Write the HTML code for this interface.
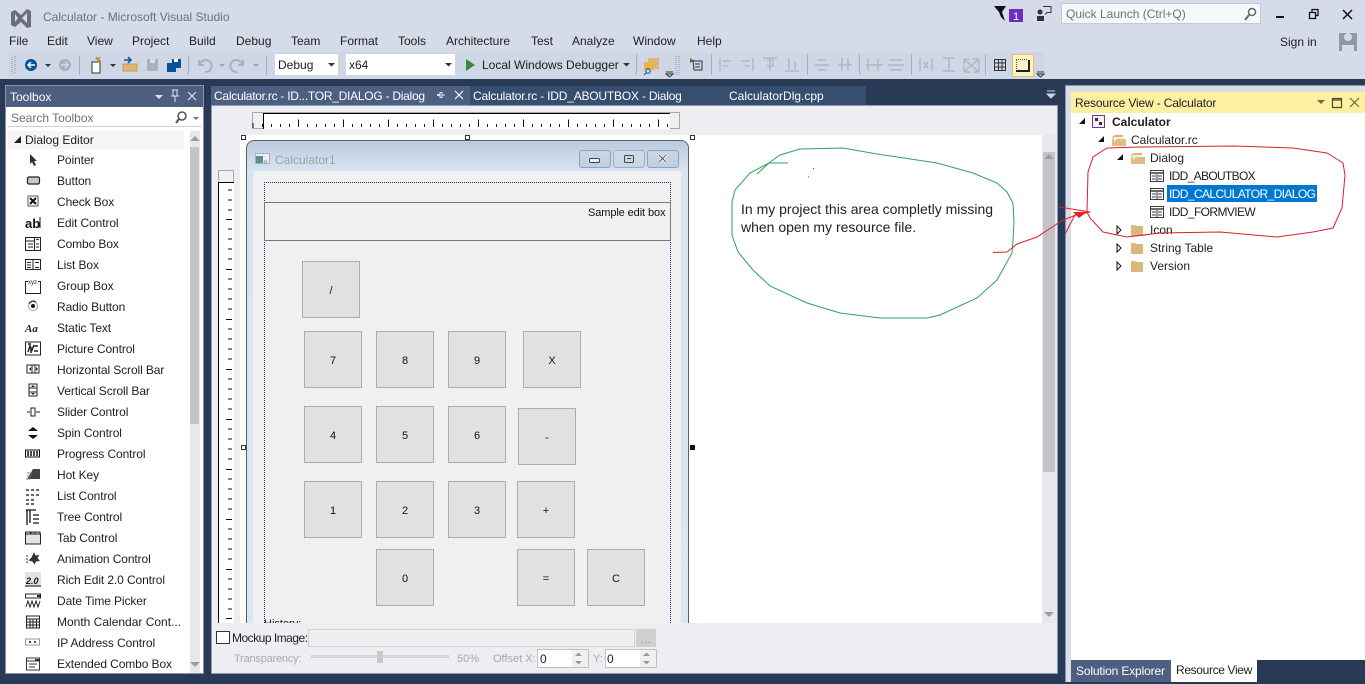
<!DOCTYPE html>
<html><head><meta charset="utf-8"><title>Calculator - Microsoft Visual Studio</title>
<style>
html,body{margin:0;padding:0;width:1365px;height:684px;overflow:hidden;background:#293a56}
body{position:relative;font:12px/16px "Liberation Sans",sans-serif;color:#1e1e1e}
div{position:absolute;box-sizing:border-box}
.t{white-space:nowrap;height:16px}
.i{letter-spacing:-.1px}
.btn{background:#e1e1e1;border:1px solid #adadad;width:58px;height:57px;text-align:center;line-height:58px;font-size:11px;color:#111}
.w{color:#fff}.g{color:#a9a9ad;font-size:11px}
svg{position:absolute;left:0;top:0}
</style></head><body>
<div style="left:0;top:0;width:1365px;height:79px;background:#d6dbe9"></div>
<div style="left:8px;top:52px;width:1037px;height:27px;background:#cfd6e5"></div>
<div style="left:275px;top:54px;width:63px;height:21px;background:#fff"></div>
<div style="left:346px;top:54px;width:109px;height:21px;background:#fff"></div>
<div style="left:1012px;top:54px;width:22px;height:23px;background:#fcf3c4;border:1px solid #e5c365"></div>
<div style="left:1061px;top:3px;width:200px;height:21px;background:#f7f8fb;border:1px solid #c4cad9"></div>
<div style="left:1339px;top:33px;width:18px;height:18px;background:#8f98a8"></div>

<div class="t" style="left:43px;top:9px;color:#6d7079">Calculator - Microsoft Visual Studio</div>
<div class="t" style="left:9px;top:33px">File</div>
<div class="t" style="left:47px;top:33px">Edit</div>
<div class="t" style="left:87px;top:33px">View</div>
<div class="t" style="left:132px;top:33px">Project</div>
<div class="t" style="left:189px;top:33px">Build</div>
<div class="t" style="left:236px;top:33px">Debug</div>
<div class="t" style="left:291px;top:33px">Team</div>
<div class="t" style="left:340px;top:33px">Format</div>
<div class="t" style="left:398px;top:33px">Tools</div>
<div class="t" style="left:446px;top:33px">Architecture</div>
<div class="t" style="left:531px;top:33px">Test</div>
<div class="t" style="left:572px;top:33px">Analyze</div>
<div class="t" style="left:633px;top:33px">Window</div>
<div class="t" style="left:697px;top:33px">Help</div>
<div class="t" style="left:1280px;top:34px">Sign in</div>
<div class="t" style="left:1066px;top:6px;color:#717171">Quick Launch (Ctrl+Q)</div>
<div class="t" style="left:278px;top:57px">Debug</div>
<div class="t" style="left:349px;top:57px">x64</div>
<div class="t" style="left:482px;top:57px">Local Windows Debugger</div>

<!-- Toolbox -->
<div style="left:5px;top:85px;width:199px;height:589px;background:#fff;border:1px solid #8593b0"></div>
<div style="left:6px;top:86px;width:197px;height:21px;background:#4d6082"></div>
<div class="t w" style="left:10px;top:89px">Toolbox</div>
<div style="left:7px;top:108px;width:195px;height:19px;background:#fff;border-bottom:1px solid #ccd2de"></div>
<div class="t" style="left:11px;top:110px;color:#717171">Search Toolbox</div>
<div style="left:8px;top:131px;width:176px;height:18px;background:#f5f5f7"></div>
<div class="t" style="left:25px;top:132px">Dialog Editor</div>
<div style="left:190px;top:131px;width:10px;height:542px;background:#e8e8ec"></div>
<div style="left:190px;top:147px;width:9px;height:277px;background:#c2c3c9"></div>
<div class="t i" style="left:57px;top:152px">Pointer</div>
<div class="t i" style="left:57px;top:173px">Button</div>
<div class="t i" style="left:57px;top:194px">Check Box</div>
<div class="t i" style="left:57px;top:215px">Edit Control</div>
<div class="t i" style="left:57px;top:236px">Combo Box</div>
<div class="t i" style="left:57px;top:257px">List Box</div>
<div class="t i" style="left:57px;top:278px">Group Box</div>
<div class="t i" style="left:57px;top:299px">Radio Button</div>
<div class="t i" style="left:57px;top:320px">Static Text</div>
<div class="t i" style="left:57px;top:341px">Picture Control</div>
<div class="t i" style="left:57px;top:362px">Horizontal Scroll Bar</div>
<div class="t i" style="left:57px;top:383px">Vertical Scroll Bar</div>
<div class="t i" style="left:57px;top:404px">Slider Control</div>
<div class="t i" style="left:57px;top:425px">Spin Control</div>
<div class="t i" style="left:57px;top:446px">Progress Control</div>
<div class="t i" style="left:57px;top:467px">Hot Key</div>
<div class="t i" style="left:57px;top:488px">List Control</div>
<div class="t i" style="left:57px;top:509px">Tree Control</div>
<div class="t i" style="left:57px;top:530px">Tab Control</div>
<div class="t i" style="left:57px;top:551px">Animation Control</div>
<div class="t i" style="left:57px;top:572px">Rich Edit 2.0 Control</div>
<div class="t i" style="left:57px;top:593px">Date Time Picker</div>
<div class="t" style="left:57px;top:614px">Month Calendar Cont...</div>
<div class="t i" style="left:57px;top:635px">IP Address Control</div>
<div class="t i" style="left:57px;top:656px">Extended Combo Box</div>

<!-- Document -->
<div style="left:211px;top:86px;width:259px;height:19px;background:#4d6082"></div>
<div style="left:470px;top:86px;width:396px;height:19px;background:#364e6f"></div>
<div class="t w" style="left:214px;top:88px;letter-spacing:-.26px">Calculator.rc - ID...TOR_DIALOG - Dialog</div>
<div class="t w" style="left:473px;top:88px;letter-spacing:-.2px">Calculator.rc - IDD_ABOUTBOX - Dialog</div>
<div class="t w" style="left:729px;top:88px">CalculatorDlg.cpp</div>
<div style="left:211px;top:105px;width:847px;height:569px;background:#eeeef2;border:1px solid #8e9bb6"></div>
<div style="left:240px;top:135px;width:802px;height:488px;background:#fff"></div>
<div style="left:1042px;top:135px;width:14px;height:488px;background:#e8e8ec"></div>
<div style="left:1043px;top:152px;width:12px;height:320px;background:#c2c3c9"></div>

<!-- Rulers -->
<div style="left:252px;top:112px;width:428px;height:17px;background:#f0f0f0;border:1px solid #a8a8a8"></div>
<div style="left:263px;top:113px;width:407px;height:16px;background:#fff;border-top:1px solid #000;border-left:1px solid #000"></div>
<div style="left:218px;top:170px;width:16px;height:13px;background:#f0f0f0;border:1px solid #a8a8a8"></div>
<div style="left:218px;top:182px;width:16px;height:441px;background:#fff;border-top:1px solid #000;border-left:1px solid #000"></div>

<!-- Dialog -->
<div style="left:246px;top:140px;width:443px;height:483px;border:1px solid #56606e;border-bottom:0;border-radius:8px 8px 0 0;background:linear-gradient(#bccbdb,#d7e4f2 30px,#d9e6f3)"></div>
<div style="left:253px;top:171px;width:428px;height:452px;background:#f0f0f0"></div>
<div class="t" style="left:275px;top:152px;color:#98a2ad">Calculator1</div>
<div style="left:579px;top:150px;width:32px;height:18px;border:1px solid #8fa1b5;border-radius:3px;background:linear-gradient(#c9d6e3,#bfcfdf)"></div>
<div style="left:613px;top:150px;width:32px;height:18px;border:1px solid #a0b0c2;border-radius:3px;background:linear-gradient(#cfdbe7,#c6d5e4)"></div>
<div style="left:647px;top:150px;width:32px;height:18px;border:1px solid #8fa1b5;border-radius:3px;background:linear-gradient(#c9d6e3,#bfcfdf)"></div>
<div style="left:264px;top:182px;width:407px;height:441px;border:1px dotted #23238a;border-bottom:0"></div>
<div style="left:264px;top:202px;width:407px;height:39px;border:1px solid #777"></div>
<div class="t" style="left:588px;top:205px;font-size:11px;color:#111;letter-spacing:-.1px">Sample edit box</div>
<div style="left:264px;top:616px;width:60px;height:7px;overflow:hidden;font-size:11px;line-height:16px;white-space:nowrap">History:</div>

<div class="btn" style="left:302px;top:261px">/</div>
<div class="btn" style="left:304px;top:331px">7</div>
<div class="btn" style="left:376px;top:331px">8</div>
<div class="btn" style="left:448px;top:331px">9</div>
<div class="btn" style="left:523px;top:331px">X</div>
<div class="btn" style="left:304px;top:406px">4</div>
<div class="btn" style="left:376px;top:406px">5</div>
<div class="btn" style="left:448px;top:406px">6</div>
<div class="btn" style="left:518px;top:408px">-</div>
<div class="btn" style="left:304px;top:481px">1</div>
<div class="btn" style="left:376px;top:481px">2</div>
<div class="btn" style="left:448px;top:481px">3</div>
<div class="btn" style="left:517px;top:481px">+</div>
<div class="btn" style="left:376px;top:549px">0</div>
<div class="btn" style="left:517px;top:549px">=</div>
<div class="btn" style="left:587px;top:549px">C</div>

<!-- Bottom options -->
<div style="left:216px;top:631px;width:14px;height:13px;background:#fff;border:1px solid #333"></div>
<div class="t" style="left:232px;top:630px;letter-spacing:-.5px">Mockup Image:</div>
<div style="left:308px;top:629px;width:327px;height:18px;background:#efeff1;border:1px solid #d0d0d0"></div>
<div style="left:636px;top:629px;width:20px;height:18px;background:#cfcfcf;color:#999;text-align:center;line-height:20px">...</div>
<div class="t g" style="left:234px;top:651px;letter-spacing:-.2px">Transparency:</div>
<div style="left:311px;top:655px;width:138px;height:3px;background:#dcdcdc;border:1px solid #d3d3d3"></div>
<div style="left:377px;top:651px;width:6px;height:12px;background:#c8c8c8"></div>
<div class="t g" style="left:457px;top:651px">50%</div>
<div class="t g" style="left:493px;top:651px">Offset X:</div>
<div style="left:537px;top:649px;width:52px;height:19px;background:#fff;border:1px solid #c0c0c0"></div>
<div class="t" style="left:540px;top:651px">0</div>
<div style="left:572px;top:650px;width:16px;height:17px;background:#f0f0f0"></div>
<div class="t g" style="left:593px;top:651px">Y:</div>
<div style="left:605px;top:649px;width:52px;height:19px;background:#fff;border:1px solid #c0c0c0"></div>
<div class="t" style="left:607px;top:651px">0</div>
<div style="left:640px;top:650px;width:16px;height:17px;background:#f0f0f0"></div>

<!-- Resource View -->
<div style="left:1065px;top:85px;width:300px;height:597px;background:#d9dde6;border-top:1px solid #8593b0;border-left:1px solid #8593b0"></div>
<div style="left:1071px;top:92px;width:294px;height:590px;background:#fff"></div>
<div style="left:1071px;top:92px;width:294px;height:21px;background:#fdf0a0"></div>
<div class="t" style="left:1075px;top:95px;letter-spacing:-.15px">Resource View - Calculator</div>
<div class="t" style="left:1112px;top:114px;font-weight:bold">Calculator</div>
<div class="t" style="left:1131px;top:132px">Calculator.rc</div>
<div class="t" style="left:1150px;top:150px">Dialog</div>
<div class="t" style="left:1169px;top:168px;letter-spacing:-.67px">IDD_ABOUTBOX</div>
<div style="left:1167px;top:185px;width:150px;height:17px;background:#0078d2"></div>
<div class="t w" style="left:1169px;top:186px;letter-spacing:-.6px">IDD_CALCULATOR_DIALOG</div>
<div class="t" style="left:1169px;top:204px;letter-spacing:-.6px">IDD_FORMVIEW</div>
<div class="t" style="left:1150px;top:222px">Icon</div>
<div class="t" style="left:1150px;top:240px">String Table</div>
<div class="t" style="left:1150px;top:258px">Version</div>
<div style="left:1071px;top:660px;width:294px;height:24px;background:#293a56"></div>
<div style="left:1071px;top:660px;width:100px;height:22px;background:#4d6082"></div>
<div class="t w" style="left:1076px;top:663px;letter-spacing:-.15px">Solution Explorer</div>
<div style="left:1171px;top:660px;width:86px;height:22px;background:#fff"></div>
<div class="t" style="left:1176px;top:662px;letter-spacing:-.35px">Resource View</div>

<svg width="1365" height="684" viewBox="0 0 1365 684" fill="none">
<!-- logo -->
<path d="M11 12l4-2 6 5 6-6 4 2v16l-4 1-6-6-6 5-4-2zM15 14v8l3-4zM27 13l-5 5 5 5z" fill="#6c6f78" fill-rule="evenodd"/>
<!-- notifications -->
<path d="M994 6h12l-4 6 3 9-4-4-2-5z" fill="#111"/>
<rect x="1009" y="9" width="14" height="13" fill="#6f2dbd"/>
<text x="1013" y="20" font-size="11" fill="#fff" font-family="Liberation Sans">1</text>
<circle cx="1040" cy="12" r="2.5" fill="#333"/><path d="M1037 21v-5h7v5z" fill="#333"/>
<path d="M1043 6.500h8v6h-4l-2 2" stroke="#333"/>
<circle cx="1252" cy="12" r="3.500" stroke="#666" stroke-width="1.500"/><path d="M1249 15l-4 5" stroke="#666" stroke-width="2"/>
<path d="M1276 17h8" stroke="#111" stroke-width="2"/>
<path d="M1309.500 12.500h6v6h-6zM1312 12.500v-3h6v6h-2.500" stroke="#111" stroke-width="1.300"/>
<path d="M1343 10l9 9M1352 10l-9 9" stroke="#111" stroke-width="1.500"/>
<path d="M1344 37a4 4 0 1 0 8 0a4 4 0 1 0-8 0M1342 51v-6h12v6z" fill="#d6dbe9"/>
<!-- toolbar -->
<path d="M12 57v17M15 56v18" stroke="#8d94a5" stroke-dasharray="1 1"/>
<circle cx="31" cy="65" r="6" fill="#00539c"/><path d="M35 65h-7M31 62l-3 3 3 3" stroke="#fff" stroke-width="1.500"/>
<path d="M45 64h6l-3 3z" fill="#333"/>
<circle cx="65" cy="65" r="6" fill="#aab0bd"/><path d="M61 65h7M65 62l3 3-3 3" stroke="#d6dbe9" stroke-width="1.500"/>
<path d="M79.500 56v19M188.500 56v19M266.500 56v19M636.500 54v21M711.500 54v21M807.500 54v21M859.500 54v21M911.500 54v21M985.500 54v21" stroke="#a6aebd"/>
<path d="M92 62h8v11h-8z" fill="#fff" stroke="#333"/><path d="M96 57l1 2 2-1-1 2 2 1-2 1" stroke="#c08a1c" stroke-width="1.500"/>
<path d="M110 64h6l-3 3z" fill="#333"/>
<path d="M123 64h14v7h-14z" fill="#dcb67a" stroke="#c89b4e"/><path d="M124 60h6M128 57l3 3-3 3" stroke="#00539c" stroke-width="1.500"/>
<path d="M147 59h11v12h-11z" fill="#aab0bd"/><path d="M150 59h5v4h-5z" fill="#d6dbe9"/>
<path d="M167 63h9v9h-9z" fill="#00539c"/><path d="M172 59h9v9h-9z" fill="#00539c"/><path d="M174 59h4v3h-4z" fill="#fff"/>
<path d="M199 60v5h5M200 64a6 6 0 1 1 5 8" stroke="#aab0bd" stroke-width="2"/>
<path d="M219 64h6l-3 3z" fill="#9aa1b0"/>
<path d="M243 60v5h-5M242 64a6 6 0 1 0-5 8" stroke="#aab0bd" stroke-width="2"/>
<path d="M253 64h6l-3 3z" fill="#9aa1b0"/>
<path d="M328 63h7l-3.500 3.500z" fill="#333"/><path d="M445 63h7l-3.500 3.500z" fill="#333"/>
<path d="M466 59l9 6-9 6z" fill="#388a34"/>
<path d="M623 63h7l-3.500 3.500z" fill="#333"/>
<path d="M648 58h11v11h-11z" fill="#dcb67a"/><path d="M644 62h10v8h-10z" fill="#e8b34a"/>
<circle cx="648" cy="71" r="2.200" stroke="#00539c"/><path d="M646 73l-2 2" stroke="#00539c"/>
<path d="M666 72h7M666 74h7l-3.500 3z" stroke="#333"/>
<path d="M676 56v19M679 56v19" stroke="#8d94a5" stroke-dasharray="1 1"/>
<path d="M690 58v5l4-2.500z" fill="#388a34"/><path d="M693 61h9v9h-8zM695 64h5M695 67h5" stroke="#333"/>
<g stroke="#aab0bd" stroke-width="1.200">
<path d="M720 58v13M723 61h8M723 66h5M741 61h9M745 66h5M753 58v13M763 58h14M770 60v11M767 60h6v6h-6M785 71h14M789 58v11M795 62v7M818 60h8M818 70h8M815 65h14M842 58v13M848 58v13M838 65h14M868 58v13M878 58v13M865 65h18M890 60h12M890 70h12M888 65h16M920 58v13M932 58v13M924 62l4 6M928 62l-4 6M943 58h12M943 71h12M949 58v13M964 59h6M964 59v6M979 59h-6M979 59v6M964 72h6M964 72v-6M979 72h-6M979 72v-6M965 60l13 11M978 60l-13 11"/>
</g>
<path d="M994.500 59.500h11v11h-11zM998.500 59.500v11M1002 59.500v11M994.500 63v0h11M994.500 67h11" stroke="#333"/>
<path d="M1029 60v11h-13" stroke="#222" stroke-width="2" fill="none"/><path d="M1016 59.500h12M1016.500 60v10" stroke="#555" stroke-dasharray="1 1"/>
<path d="M1037 72h7M1037 74h7l-3.500 3z" stroke="#333"/>
<!-- toolbox header -->
<path d="M155 95h8l-4 4z" fill="#dfe4ee"/>
<path d="M172 90h6M173 90v6M177 90v6M171 96h8M175 96v6" stroke="#dfe4ee"/>
<path d="M188 92l8 8M196 92l-8 8" stroke="#dfe4ee" stroke-width="1.200"/>
<circle cx="182" cy="116" r="4" stroke="#555" stroke-width="1.500"/><path d="M179 119l-3 4" stroke="#555" stroke-width="2"/>
<path d="M193 117h6l-3 3z" fill="#777"/>
<path d="M20 136v7h-7z" fill="#1e1e1e" transform="translate(1,0)"/>
<path d="M190 141l5-5 5 5z" fill="#9a9ba3"/><path d="M190 662h10l-5 5z" fill="#9a9ba3"/>
<!-- doc tabs -->
<path d="M437 94.500h3v-2h2v5h-2v-2h-3M442 95h3" stroke="#dfe4ee"/>
<path d="M455 91l8 8M463 91l-8 8" stroke="#fff" stroke-width="1.200"/>
<path d="M1047 91h8M1047 94h8l-4 4z" stroke="#cdd3e0" fill="#cdd3e0"/>
<path d="M1044 159l5-5 5 5z" fill="#9a9ba3"/><path d="M1044 612h10l-5 5z" fill="#9a9ba3"/>
<!-- toolbox icons -->
<path d="M30 154v10l2-2 2 4 2-1-2-4h3z" fill="#333"/>
<rect x="27.500" y="177" width="12" height="7" rx="1.500" fill="#c8c8c8" stroke="#222" stroke-width="1.200"/>
<rect x="28" y="196" width="10" height="10" fill="#fff" stroke="#555"/><path d="M30 198l6 6M36 198l-6 6" stroke="#111" stroke-width="2"/>
<text x="25" y="228" font-size="13" font-weight="bold" fill="#111" font-family="Liberation Sans">ab</text><path d="M40 217v11" stroke="#111"/>
<path d="M25.500 237.500h15v13h-15zM25.500 241h9M34.500 237.500v13M28 244h5M28 247h5M36 240l1.500-1 1.500 1M36 244h3M36 247h3" stroke="#222"/>
<path d="M25.500 259.500h15v10h-15zM33 259.500v10M27 262.500h4M27 265h4M27 267.500h4M35 262.500h4M35 267.500h4" stroke="#222"/>
<path d="M28 281.500h-2.500v12h15v-12H38" stroke="#222"/><text x="28" y="284" font-size="6" fill="#222" font-family="Liberation Sans">xyz</text>
<circle cx="33" cy="306" r="4.500" stroke="#999"/><circle cx="33" cy="306" r="2" fill="#111"/><path d="M29 304a4.500 4.500 0 0 1 7-2" stroke="#111"/>
<text x="25" y="332" font-size="11" font-style="italic" font-weight="bold" fill="#222" font-family="Liberation Serif">Aa</text>
<path d="M25.500 342h15v13h-15z" stroke="#222"/><path d="M28 352l2-6 2 4 2-5M34 346h4M34 351h4M28 344h3M31 348v5" stroke="#222" stroke-width="1.500"/>
<path d="M27 365h12v8h-12zM32 365v8M35 365v8" stroke="#222"/><path d="M31 367l-2 2 2 2zM36 367l2 2-2 2z" fill="#222"/>
<path d="M29 384h8v12h-8zM29 388h8M29 392h8" stroke="#222"/><path d="M33 385l-2 2h4zM33 395l-2-2h4z" fill="#222"/>
<path d="M27 412h3M36 412h4M31 408h4v8h-4z" stroke="#222"/>
<path d="M33 427l-5 4h10zM33 439l-5-4h10z" fill="#111"/>
<path d="M25.500 450h14v7h-14z" stroke="#111"/><path d="M28 451v5M31 451v5M34 451v5M37 451v5" stroke="#111" stroke-width="1.500"/>
<path d="M33 469h7v10h-13z" fill="#444"/><path d="M27 473h5M27 476h4M26 479h4" stroke="#888"/>
<path d="M26 490h3M31 490h3M36 490h3M26 495h3M31 495h3M36 495h3M26 500h3M31 500h3M26 504h3M31 504h3" stroke="#333" stroke-width="1.500"/>
<path d="M27 510v15M26 510h10M30 510v13M33 515h6M33 519h6M33 523h6" stroke="#111" stroke-width="1.300"/>
<path d="M25.500 534h15v10h-15zM25.500 534v-2h5v2M31 534v-2h4v2M35 534v-2h5v2" fill="#e3e3e3" stroke="#222"/>
<path d="M34 552l1.500 3.500 4-.5-2 3 2.500 3-4 .5-1.500 3-2-3-4-1 3-3z" fill="#333"/><path d="M26 556h2M26 559h2M26 562h2" stroke="#333"/>
<rect x="25" y="572" width="16" height="15" fill="#e2e2e2"/><text x="26" y="584" font-size="9" font-style="italic" font-weight="bold" fill="#111" font-family="Liberation Sans">2.0</text><path d="M25 586h16" stroke="#111"/>
<path d="M25.500 594h15v4h-15z" stroke="#222"/><path d="M37 595h3v2h-3z" fill="#222"/><path d="M26 607l2-6 2 6 2-6 2 6 2-6 2 6 2-6" stroke="#222"/>
<path d="M26.500 616h13v12h-13zM26.500 619h13M26.500 622h13M26.500 625h13M30 619v9M33 619v9M36.500 619v9" stroke="#222"/>
<path d="M25.500 639h14v6h-14z" stroke="#7f9db4"/><path d="M29 642h2M34 642h2" stroke="#111" stroke-width="1.500"/>
<path d="M26.500 658h13v12h-13zM26.500 661h13M29 664h8M29 667h6" stroke="#333"/><path d="M35 659h4v2h-4z" fill="#333"/>
<!-- Dialog caption -->
<path d="M255.500 153.500h14v10h-14z" fill="#e8eef3" stroke="#9fb0c0"/><path d="M256 156h7v7h-7z" fill="#5b8d8f"/><path d="M264 160h3v3h-3z" fill="#bbb"/>
<rect x="589.500" y="158.500" width="10" height="4" rx="1" stroke="#444" fill="#e7eef6"/>
<rect x="624.500" y="155.500" width="9" height="7" rx="1" stroke="#444"/><path d="M627 158.500h4" stroke="#444"/>
<path d="M659 155l7 7M666 155l-7 7" stroke="#f4f7fa" stroke-width="3"/><path d="M659 155l7 7M666 155l-7 7" stroke="#555" stroke-width="1"/>
<!-- Rulers ticks -->
<path d="M253 123v5" stroke="#111"/>
<path d="M262 125.500H670" stroke="#111" stroke-width="3" stroke-dasharray="1 8"/>
<path d="M298 123H670" stroke="#111" stroke-width="7" stroke-dasharray="1 44"/>
<path d="M228 190h4M228 200h4M228 210h4M226 219.500h6M228 229h4M228 239h4M228 249h4M228 259h4M226 269.500h6M228 279h4M228 289h4M228 299h4M228 309h4M226 319.500h6M228 329h4M228 339h4M228 349h4M228 359h4M226 369.500h6M228 379h4M228 389h4M228 399h4M228 409h4M226 419.500h6M228 429h4M228 439h4M228 449h4M228 459h4M226 469.500h6M228 479h4M228 489h4M228 499h4M228 509h4M226 519.500h6M228 529h4M228 539h4M228 549h4M228 559h4M226 569.500h6M228 579h4M228 589h4M228 599h4M228 609h4M226 618.500h6" stroke="#111"/>
<!-- handles -->
<g fill="#fff" stroke="#333"><rect x="241.500" y="135.500" width="4" height="4"/><rect x="465.500" y="135.500" width="4" height="4"/><rect x="690.500" y="135.500" width="4" height="4"/><rect x="241.500" y="445.500" width="4" height="4"/></g>
<rect x="690" y="445" width="5" height="5" fill="#111"/>
<!-- bottom spinners -->
<path d="M575 656h7l-3.500-3.500zM575 661h7l-3.500 3.500zM643 656h7l-3.500-3.500zM643 661h7l-3.500 3.500z" fill="#999"/>
<!-- Resource view header -->
<path d="M1317 100h8l-4 4z" fill="#716a44"/>
<path d="M1332.500 98.500h9v9h-9zM1332.500 100h9" stroke="#4f4a2e" stroke-width="1.200"/>
<path d="M1350 98l9 9M1359 98l-9 9" stroke="#6d6848" stroke-width="1.200"/>
<!-- Tree -->
<path d="M1085 118v6h-6zM1104 136v6h-6zM1123 154v6h-6z" fill="#111"/>
<path d="M1117 226l4 4-4 4zM1117 244l4 4-4 4zM1117 262l4 4-4 4z" fill="#fff" stroke="#111"/>
<rect x="1092.500" y="115.500" width="12" height="12" fill="#f4eef6" stroke="#6c3b8e"/><path d="M1095 118h3v3h-3zM1099 122h3v3h-3z" fill="#333"/>
<g fill="#dcb67a"><path d="M1112 137l3-2h8v4h-9zM1131 155l3-2h8v4h-9zM1131 225h4l1 1h7v10h-12zM1131 243h4l1 1h7v10h-12zM1131 261h4l1 1h7v10h-12z"/><path d="M1112 139h14v7h-14zM1131 157h14v7h-14z" opacity=".9"/></g>
<path d="M1114 137h9v2h-6l-3 3zM1133 155h9v2h-6l-3 3z" fill="#f3efe4"/>
<g stroke="#3a3a44" fill="#fff"><path d="M1150.500 170.500h13v11h-13zM1150.500 188.500h13v11h-13zM1150.500 206.500h13v11h-13z"/><path d="M1150 173h14M1150 191h14M1150 209h14" stroke-width="1.500"/><path d="M1157 174v7M1157 192v7M1157 210v7M1152 176h4M1152 179h4M1158 176h4M1158 179h4M1152 194h4M1152 197h4M1158 194h4M1158 197h4M1152 212h4M1152 215h4M1158 212h4M1158 215h4"/></g>
<!-- annotation -->
<path d="M757 174L769 163L780 155L800 149L843 148L877 154L937 163L973 173L997 183L1007 192L1013 203L1014 222L1013 240L1012 253L997 280L977 298L940 315L927 318L880 318L840 313L807 303L770 286L753 270L738 252L732 235L732 202L735 190L750 173L769 163H788" stroke="#2ca25c" stroke-width="1"/>
<path d="M813 168.500h1M808 177h1" stroke="#444"/>
<path d="M993 252.500L1007 252L1017 244L1037 237L1063 220L1084 212M1059 207L1090 212L1075 215L1065 234" stroke="#e3202b" stroke-width="1"/>
<path d="M1073 212l14 0-8 6z" fill="#e3202b"/>
<path d="M1087 212L1088 172L1093 157L1107 148L1140 147L1233 146L1293 148L1327 153L1343 163L1345 175L1342 208L1333 228L1313 232L1277 237L1220 232L1160 233L1127 237L1103 232L1090 218Z" stroke="#d9212c" stroke-width="1"/>
</svg>
<div class="t" style="left:741px;top:201px;font-size:14px;color:#222">In my project this area completly missing</div>
<div class="t" style="left:741px;top:219px;font-size:14px;color:#222">when open my resource file.</div>
</body></html>
